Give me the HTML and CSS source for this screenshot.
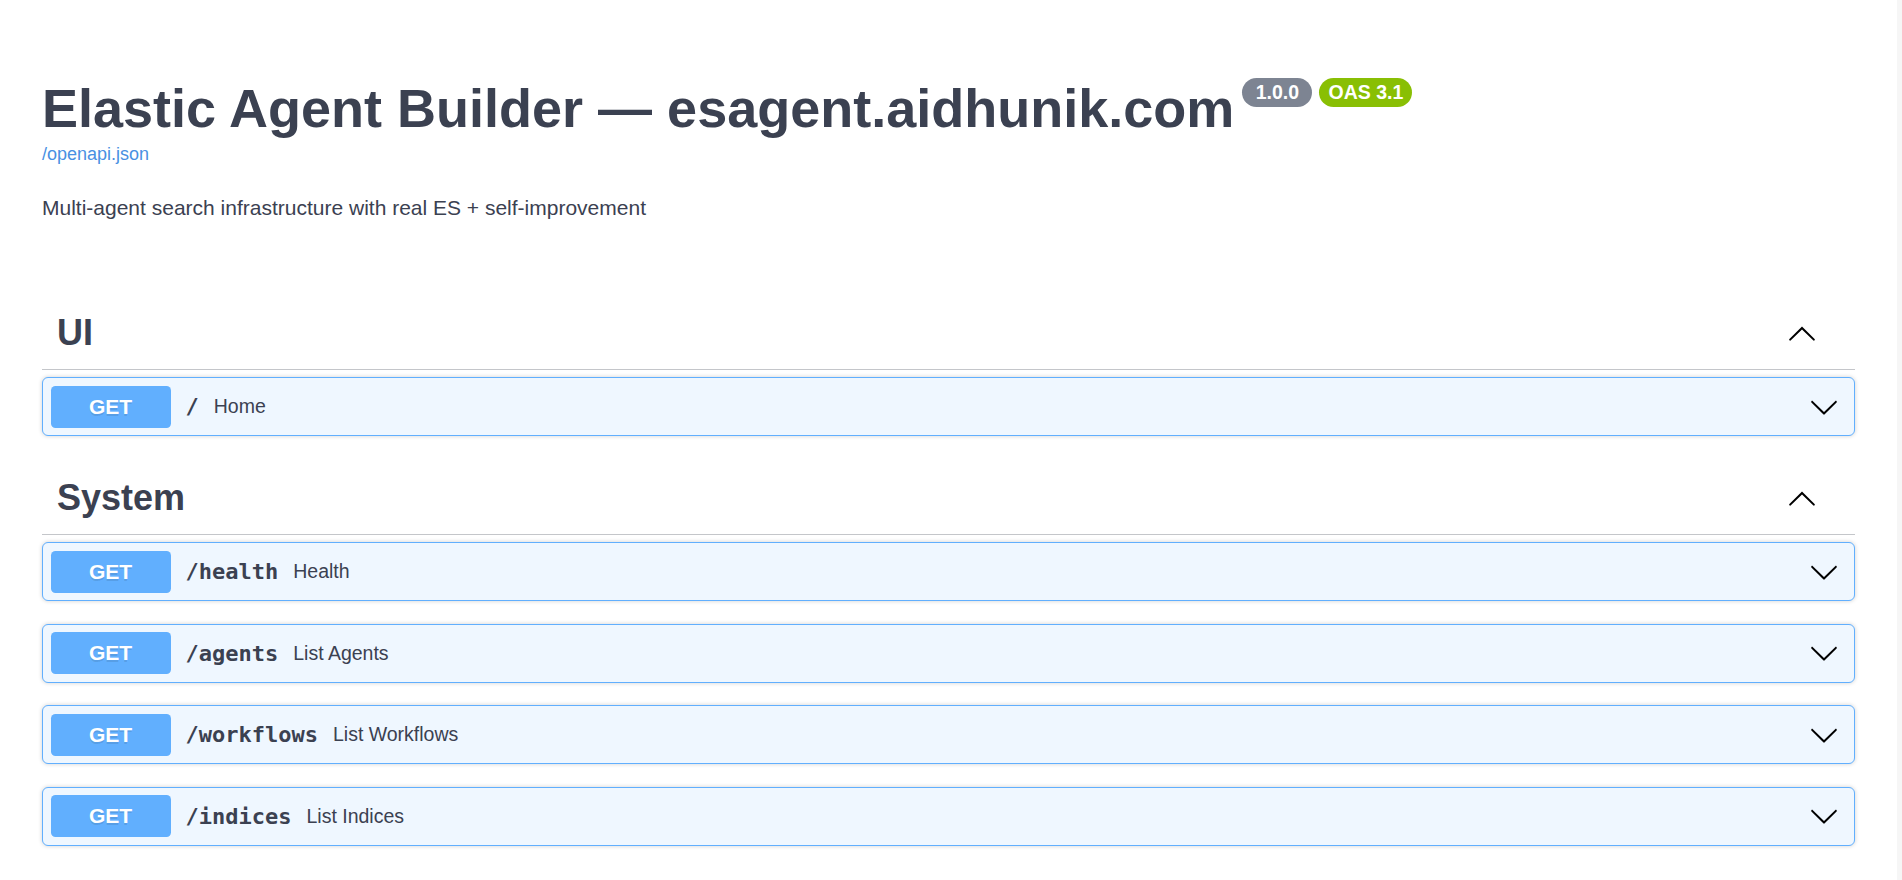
FILE: index.html
```html
<!DOCTYPE html>
<html lang="en">
<head>
<meta charset="utf-8">
<title>Elastic Agent Builder — esagent.aidhunik.com - Swagger UI</title>
<link rel="stylesheet" href="styles.css">
</head>
<body>
<svg class="defs" width="0" height="0" aria-hidden="true">
  <symbol id="arrow-down" viewBox="0 0 20 20"><path d="M17.418 6.109c.272-.268.709-.268.979 0s.271.701 0 .969l-7.908 7.83c-.27.268-.707.268-.979 0l-7.908-7.83c-.27-.268-.27-.701 0-.969.271-.268.709-.268.979 0L10 13.25l7.418-7.141z"/></symbol>
  <symbol id="arrow-up" viewBox="0 0 20 20"><path d="M17.418 14.908c.272.268.709.268.979 0s.271-.701 0-.969l-7.908-7.83c-.27-.268-.707-.268-.979 0l-7.908 7.83c-.27.268-.27.701 0 .969.271.268.709.268.979 0L10 7.665l7.418 7.243z"/></symbol>
</svg>
<div class="page">
  <div class="main">
    <section class="info">
      <hgroup class="hgroup">
        <h2 class="title"><span class="title-text">Elastic Agent Builder — esagent.aidhunik.com</span><span class="badges"><span class="badge version"> 1.0.0 </span><span class="badge oas">OAS 3.1</span></span></h2>
        <a class="url" href="#">/openapi.json</a>
      </hgroup>
      <p class="desc">Multi-agent search infrastructure with real ES + self-improvement</p>
    </section>

    <div class="operations">
      <div class="tag-section">
        <div class="tag">
          <h3 class="tag-name">UI</h3>
          <svg class="arrow up" width="30" height="30"><use href="#arrow-up"/></svg>
        </div>
        <div class="op">
          <span class="method">GET</span>
          <span class="path">/</span>
          <span class="summary">Home</span>
          <svg class="arrow" width="30" height="30"><use href="#arrow-down"/></svg>
        </div>
      </div>

      <div class="tag-section">
        <div class="tag">
          <h3 class="tag-name">System</h3>
          <svg class="arrow up" width="30" height="30"><use href="#arrow-up"/></svg>
        </div>
        <div class="op">
          <span class="method">GET</span>
          <span class="path">/health</span>
          <span class="summary">Health</span>
          <svg class="arrow" width="30" height="30"><use href="#arrow-down"/></svg>
        </div>
        <div class="op">
          <span class="method">GET</span>
          <span class="path">/agents</span>
          <span class="summary">List Agents</span>
          <svg class="arrow" width="30" height="30"><use href="#arrow-down"/></svg>
        </div>
        <div class="op">
          <span class="method">GET</span>
          <span class="path">/workflows</span>
          <span class="summary">List Workflows</span>
          <svg class="arrow" width="30" height="30"><use href="#arrow-down"/></svg>
        </div>
        <div class="op">
          <span class="method">GET</span>
          <span class="path">/indices</span>
          <span class="summary">List Indices</span>
          <svg class="arrow" width="30" height="30"><use href="#arrow-down"/></svg>
        </div>
      </div>
    </div>
  </div>
  <div class="scrollbar"></div>
</div>
</body>
</html>
```

FILE: styles.css
```css
html, body {
  margin: 0;
  padding: 0;
  background: #fff;
  height: 100%;
  overflow: hidden;
}

.defs {
  position: absolute;
  width: 0;
  height: 0;
}

.page {
  display: flex;
  height: 880px;
  overflow: hidden;
  font-family: "Liberation Sans", Arial, sans-serif;
  color: #3b4151;
}

.main {
  flex: 1;
  min-width: 0;
  padding: 0 42px;
}

.scrollbar {
  width: 5px;
  flex: none;
  background: #f6f6f6;
}

.info {
  margin: 75px 0 76.5px;
}

.hgroup {
  margin: 0 0 31px;
}

.title {
  display: flex;
  align-items: flex-start;
  margin: 0;
  padding-top: 3px;
  font-size: 54px;
  font-weight: bold;
  line-height: 60px;
  color: #3b4151;
}

.badges {
  display: flex;
  gap: 7px;
  margin-left: 8px;
}

.badge {
  display: inline-block;
  white-space: pre;
  font-size: 19.5px;
  font-weight: bold;
  line-height: 23px;
  padding: 3px 9px;
  border-radius: 60px;
  color: #fff;
}

.badge.version {
  background: #7d8492;
  padding: 3px 8px;
}

.badge.oas {
  background: #89bf04;
  padding: 3px 9px;
}

.url {
  display: block;
  margin-top: 6px;
  font-size: 18px;
  line-height: 21px;
  color: #4990e2;
  text-decoration: none;
}

.desc {
  margin: 0;
  font-size: 21px;
  line-height: 24px;
  color: #3b4151;
}

.operations {
  display: flex;
  flex-direction: column;
  gap: 3px;
}

.tag-section {
  display: flex;
  flex-direction: column;
}

.tag {
  display: flex;
  align-items: center;
  padding: 15px 30px 15px 15px;
  border-bottom: 1px solid rgba(59, 65, 81, 0.3);
  margin-bottom: 7.5px;
}

.tag-name {
  flex: 1;
  margin: 0;
  font-size: 36px;
  font-weight: bold;
  line-height: 42px;
}

.arrow {
  flex: none;
  fill: #000;
}

.arrow.up {
  margin-right: 8px;
}

.op {
  display: flex;
  align-items: center;
  padding: 7.5px;
  margin-bottom: 22.5px;
  border: 1px solid #61affe;
  border-radius: 6px;
  background: #eff7ff;
  box-shadow: 0 0 4.5px rgba(0, 0, 0, 0.19);
}

.method {
  min-width: 120px;
  padding: 9px 0;
  border-radius: 4.5px;
  background: #61affe;
  color: #fff;
  font-size: 21px;
  font-weight: bold;
  line-height: 24px;
  text-align: center;
  text-shadow: 0 1.5px 0 rgba(0, 0, 0, 0.1);
}

.path {
  padding: 0 15px;
  font-family: "DejaVu Sans Mono", "Liberation Mono", monospace;
  font-size: 22px;
  font-weight: bold;
  color: #3b4151;
}

.summary {
  flex: 1;
  font-size: 19.5px;
  color: #3b4151;
}

.op .arrow {
  margin-right: 7.5px;
}
```
